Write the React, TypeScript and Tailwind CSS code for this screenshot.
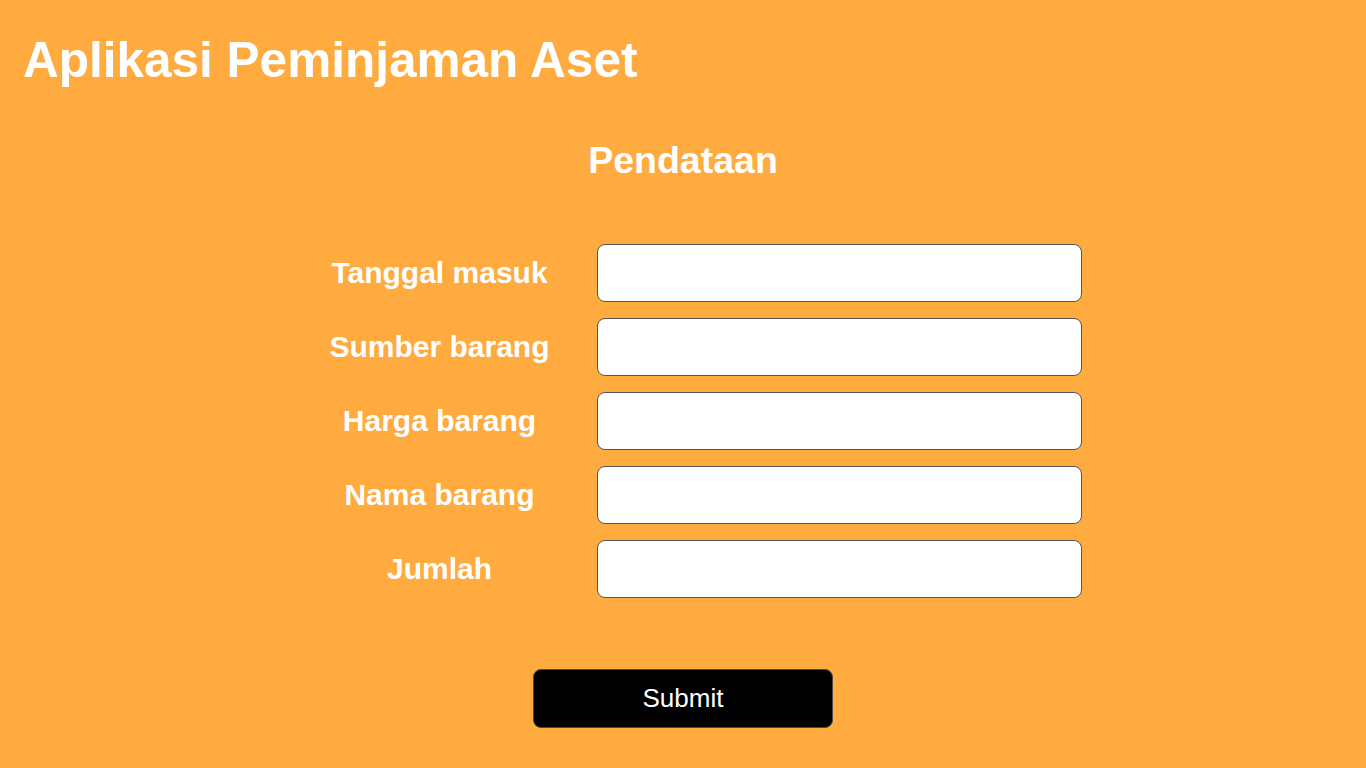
import { useState } from 'react';

const fields = [
  { key: 'tanggal', label: 'Tanggal masuk' },
  { key: 'sumber', label: 'Sumber barang' },
  { key: 'harga', label: 'Harga barang' },
  { key: 'nama', label: 'Nama barang' },
  { key: 'jumlah', label: 'Jumlah' },
];

export default function App() {
  const [values, setValues] = useState<Record<string, string>>({});

  return (
    <div className="min-h-screen bg-[#ffab40] text-white font-['Liberation_Sans',Arial,sans-serif] overflow-hidden">
      {/* Header */}
      <h1 className="pt-[35px] pl-[23px] text-[49.5px] leading-[49px] font-bold">Aplikasi Peminjaman Aset</h1>

      <h2 className="mt-[58px] text-center text-[37.5px] leading-[37px] font-bold">Pendataan</h2>

      {/* Form */}
      <form
        className="mt-[65px] flex flex-col items-center"
        onSubmit={(e) => e.preventDefault()}
      >
        <div className="flex flex-col gap-[16px] pl-[30px]">
          {fields.map((f) => (
            <div key={f.key} className="flex items-center">
              <label className="w-[250px] text-center text-[30px] leading-[30px] font-bold">{f.label}</label>
              <input
                type="text"
                value={values[f.key] || ''}
                onChange={(e) => setValues({ ...values, [f.key]: e.target.value })}
                className="ml-[32px] w-[485px] h-[58px] bg-white border border-[#555] rounded-[8px] px-3 text-black text-lg outline-none"
              />
            </div>
          ))}
        </div>

        <button
          type="submit"
          className="mt-[71px] w-[300px] h-[59px] bg-black text-white text-[26px] border border-[#4a4a4a] rounded-[8px]"
        >
          Submit
        </button>
      </form>
    </div>
  );
}
